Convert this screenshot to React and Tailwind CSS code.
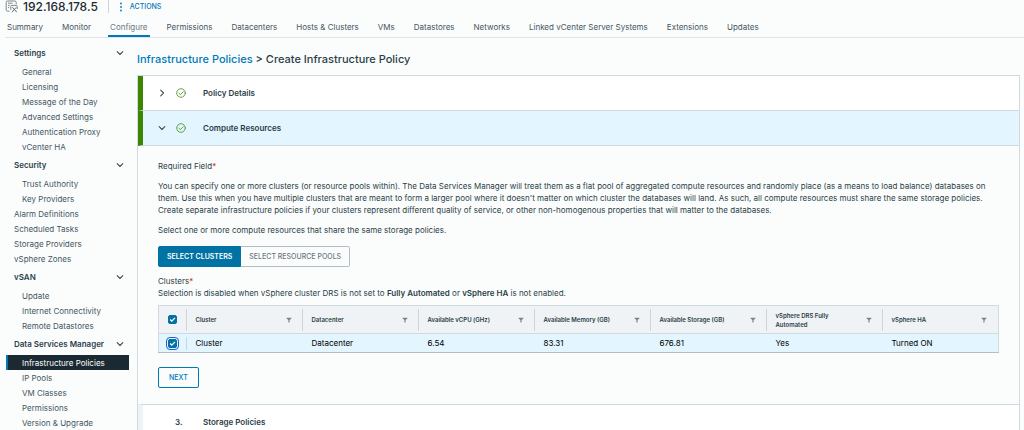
import React, { useState } from 'react'

const TABS = [
  'Summary',
  'Monitor',
  'Configure',
  'Permissions',
  'Datacenters',
  'Hosts & Clusters',
  'VMs',
  'Datastores',
  'Networks',
  'Linked vCenter Server Systems',
  'Extensions',
  'Updates',
]

const NAV = [
  { title: 'Settings', items: ['General', 'Licensing', 'Message of the Day', 'Advanced Settings', 'Authentication Proxy', 'vCenter HA'] },
  {
    title: 'Security',
    items: ['Trust Authority', 'Key Providers'],
    links: ['Alarm Definitions', 'Scheduled Tasks', 'Storage Providers', 'vSphere Zones'],
  },
  { title: 'vSAN', items: ['Update', 'Internet Connectivity', 'Remote Datastores'] },
  { title: 'Data Services Manager', items: ['Infrastructure Policies', 'IP Pools', 'VM Classes', 'Permissions', 'Version & Upgrade'] },
]

const COLUMNS = [
  'Cluster',
  'Datacenter',
  'Available vCPU (GHz)',
  'Available Memory (GB)',
  'Available Storage (GB)',
  'vSphere DRS Fully Automated',
  'vSphere HA',
]

const ROWS = [['Cluster', 'Datacenter', '6.54', '83.31', '676.81', 'Yes', 'Turned ON']]

function Chevron({ className = '' }) {
  return (
    <svg viewBox="0 0 8 8" className={`w-2 h-2 shrink-0 ${className}`} fill="none" stroke="#3c4f58" strokeWidth="1.1" strokeLinecap="round" strokeLinejoin="round">
      <path d="M1.2 2.7 4 5.5 6.8 2.7" />
    </svg>
  )
}

function CheckCircle() {
  return (
    <svg viewBox="0 0 10 10" className="w-[10px] h-[10px] shrink-0" fill="none" stroke="#4f9a2b" strokeLinecap="round" strokeLinejoin="round">
      <circle cx="5" cy="5" r="4.3" strokeWidth="0.9" />
      <path d="M2.9 5.2 4.4 6.6 7.2 3.8" strokeWidth="0.9" />
    </svg>
  )
}

function FilterIcon() {
  return (
    <svg viewBox="0 0 6 6" className="w-[6px] h-[6px]" fill="#78838a">
      <path d="M0.6 0.8h4.8v0.8L3.6 3v2.2l-1.2 0.5V3L0.6 1.6z" />
    </svg>
  )
}

function ServerIcon() {
  return (
    <svg viewBox="0 0 13 13" className="w-[13px] h-[13px] shrink-0" fill="none" stroke="#7d8588" strokeWidth="1">
      <path d="M4.6 11.2H2.6A1.4 1.4 0 0 1 1.2 9.8V2.4A1.4 1.4 0 0 1 2.6 1h7.2a1.4 1.4 0 0 1 1.4 1.4v2" />
      <path d="M3 3.2h4.6M3 5.4h1.8M3 7.6h1.2" />
      <path d="M5.8 9.8V6.4a1 1 0 0 1 1-1h4.4a1 1 0 0 1 1 1v2.8" />
      <path d="M6.8 12.2 11.2 7.4M7.4 7.2l4.4 5" stroke="#5f686c" />
    </svg>
  )
}

function Checkbox({ label, checked, onChange, focused }) {
  return (
    <span className="relative flex items-center justify-center">
      <input
        type="checkbox"
        aria-label={label}
        checked={checked}
        onChange={onChange}
        className={`peer appearance-none w-[9px] h-[9px] rounded-[2px] border border-[#0072a3] bg-white checked:bg-[#0072a3] ${focused ? 'outline-1 outline-offset-1 outline-[#1f62cf]' : ''}`}
      />
      <svg viewBox="0 0 9 9" className="absolute w-[9px] h-[9px] hidden peer-checked:block pointer-events-none" fill="none" stroke="#fff" strokeWidth="1.3">
        <path d="M2.1 4.5 3.8 6.1 7 2.9" />
      </svg>
    </span>
  )
}

function StepHeader({ title, open }) {
  return (
    <button
      aria-expanded={open}
      className={`flex items-center w-full h-[35px] border-b border-[#d0dae0] border-l-5 border-l-[#3c8500] pl-[15px] text-left ${open ? 'bg-[#e3f5ff]' : 'bg-white'}`}
    >
      <Chevron className={open ? '' : '-rotate-90'} />
      <span className="ml-2.5">
        <CheckCircle />
      </span>
      <span className="ml-[17px] font-semibold">{title}</span>
    </button>
  )
}

function NavGroup({ group, active, onSelect }) {
  const item = (name, indent) => (
    <a
      key={name}
      href="#"
      onClick={(e) => { e.preventDefault(); onSelect(`${group.title}/${name}`) }}
      className={`flex items-center h-[15px] border-l-2 ${indent ? 'pl-[14px]' : 'pl-1.5'} ${
        active === `${group.title}/${name}` ? 'bg-[#1b2a32] border-[#0079b8] text-white' : 'border-transparent text-[#45565f]'
      }`}
    >
      {name}
    </a>
  )

  return (
    <div>
      <button className="flex items-center justify-between w-full h-[22px] pl-2 pr-[5px] font-semibold text-[#2d3f49]">
        {group.title}
        <Chevron />
      </button>
      {group.items.map((name) => item(name, true))}
      {group.links?.map((name) => item(name, false))}
    </div>
  )
}

export default function App() {
  const [tab, setTab] = useState('Configure')
  const [active, setActive] = useState('Data Services Manager/Infrastructure Policies')
  const [mode, setMode] = useState('clusters')
  const [selected, setSelected] = useState([true])
  const allSelected = selected.every(Boolean)

  return (
    <div className="flex flex-col h-screen overflow-hidden bg-[#fbfdfd] text-[#2b3d47] text-[8px] leading-3 font-['Inter',sans-serif]">
      <header className="pl-[5px]">
        <div className="flex items-center h-[13px]">
          <ServerIcon />
          <h1 className="ml-[5px] text-[12px] leading-3 font-medium text-[#1b2a32]">192.168.178.5</h1>
          <div className="ml-2.5 w-px h-[13px] bg-[#ccd4d8]" />
          <button className="flex items-center ml-2.5 gap-[7px] text-[7px] font-medium text-[#0079b8]">
            <svg viewBox="0 0 4 10" className="w-1 h-2.5" fill="#0079b8">
              <circle cx="2" cy="1.5" r="0.9" />
              <circle cx="2" cy="5" r="0.9" />
              <circle cx="2" cy="8.5" r="0.9" />
            </svg>
            ACTIONS
          </button>
        </div>
        <nav className="flex h-[25px] pt-1 gap-[15px] border-b border-[#dde3e6]">
          {TABS.map((name) => (
            <button
              key={name}
              onClick={() => setTab(name)}
              className={`h-5 pt-px px-0.5 whitespace-nowrap border-b-2 ${tab === name ? 'border-[#0079b8] text-[#6b777d]' : 'border-transparent text-[#45565f]'}`}
            >
              {name}
            </button>
          ))}
        </nav>
      </header>

      <div className="flex flex-1 min-h-0">
        <aside className="w-[137px] shrink-0 pl-1.5 pr-2 pt-1">
          {NAV.map((group) => (
            <NavGroup key={group.title} group={group} active={active} onSelect={setActive} />
          ))}
        </aside>

        <main className="flex-1 min-w-0 pr-1">
          <h2 className="h-[37px] pt-3.5 text-[11px] leading-3.5 font-medium text-[#2b3d47]">
            <a href="#" className="text-[#0079b8]">Infrastructure Policies</a> &gt; Create Infrastructure Policy
          </h2>

          <div className="border border-[#d0dae0]">
            <StepHeader title="Policy Details" />
            <StepHeader title="Compute Resources" open />

            <section className="px-5 pt-3.5 pb-4">
              <p>Required Field<span className="text-[#e02200]">*</span></p>
              <p className="mt-2">
                You can specify one or more clusters (or resource pools within). The Data Services Manager will treat them as a flat pool of aggregated compute resources and randomly place (as a means to load balance) databases on them. Use this when you have multiple clusters that are meant to form a larger pool where it doesn't matter on which cluster the databases will land. As such, all compute resources must share the same storage policies. Create separate infrastructure policies if your clusters represent different quality of service, or other non-homogenous properties that will matter to the databases.
              </p>
              <p className="mt-2">Select one or more compute resources that share the same storage policies.</p>

              <div className="flex w-fit mt-2.5 h-[21px] text-[7px]">
                <button
                  onClick={() => setMode('clusters')}
                  className={`px-2 rounded-l-[2px] border ${mode === 'clusters' ? 'bg-[#0072a3] border-[#0072a3] text-white font-semibold' : 'border-[#b3bdc3] text-[#6b777d] font-medium'}`}
                >
                  SELECT CLUSTERS
                </button>
                <button
                  onClick={() => setMode('pools')}
                  className={`px-2 rounded-r-[2px] border border-l-0 ${mode === 'pools' ? 'bg-[#0072a3] border-[#0072a3] text-white font-semibold' : 'border-[#b3bdc3] text-[#6b777d] font-medium'}`}
                >
                  SELECT RESOURCE POOLS
                </button>
              </div>

              <p className="mt-2">Clusters<span className="text-[#e02200]">*</span></p>
              <p>
                Selection is disabled when vSphere cluster DRS is not set to <b className="font-semibold">Fully Automated</b> or <b className="font-semibold">vSphere HA</b> is not enabled.
              </p>

              <table className="mt-1.5 w-full table-fixed border border-[#d0dae0] border-b-[#b3bdc3]">
                <thead className="bg-[#eff3f6]">
                  <tr className="h-7 border-b border-[#d0dae0]">
                    <th className="w-[28px]">
                      <div className="flex items-center justify-center h-[22px] border-r border-[#ccd4d8]">
                        <Checkbox label="Select all" checked={allSelected} onChange={() => setSelected(selected.map(() => !allSelected))} />
                      </div>
                    </th>
                    {COLUMNS.map((name) => (
                      <th key={name} className="group text-left text-[6px] leading-[9px] font-semibold">
                        <div className="flex items-center justify-between h-[22px] pl-[9px] pr-2.5 border-r border-[#ccd4d8] group-last:border-transparent">
                          <span className="max-w-[70px]">{name}</span>
                          <button aria-label={`Filter ${name}`}>
                            <FilterIcon />
                          </button>
                        </div>
                      </th>
                    ))}
                  </tr>
                </thead>
                <tbody>
                  {ROWS.map((row, i) => (
                    <tr key={row[0]} className="h-[19px] bg-[#e3f5ff] text-black">
                      <td>
                        <div className="flex items-center justify-center h-[13px] border-r border-[#ccd4d8]">
                          <Checkbox label={`Select ${row[0]}`} checked={selected[i]} focused onChange={() => setSelected(selected.map((s, j) => (j === i ? !s : s)))} />
                        </div>
                      </td>
                      {row.map((cell, j) => (
                        <td key={j} className="pl-[9px]">{cell}</td>
                      ))}
                    </tr>
                  ))}
                </tbody>
              </table>

              <button className="mt-3.5 h-[21px] px-2.5 rounded-[2px] border border-[#0079b8] text-[7px] font-medium text-[#0079b8]">NEXT</button>
            </section>

            <button className="flex items-center w-full h-[35px] border-t border-[#d0dae0] border-l-5 border-l-[#eef3f6] bg-white pl-8 text-left font-semibold">
              <span className="w-7">3.</span>
              Storage Policies
            </button>
          </div>
        </main>
      </div>
    </div>
  )
}
